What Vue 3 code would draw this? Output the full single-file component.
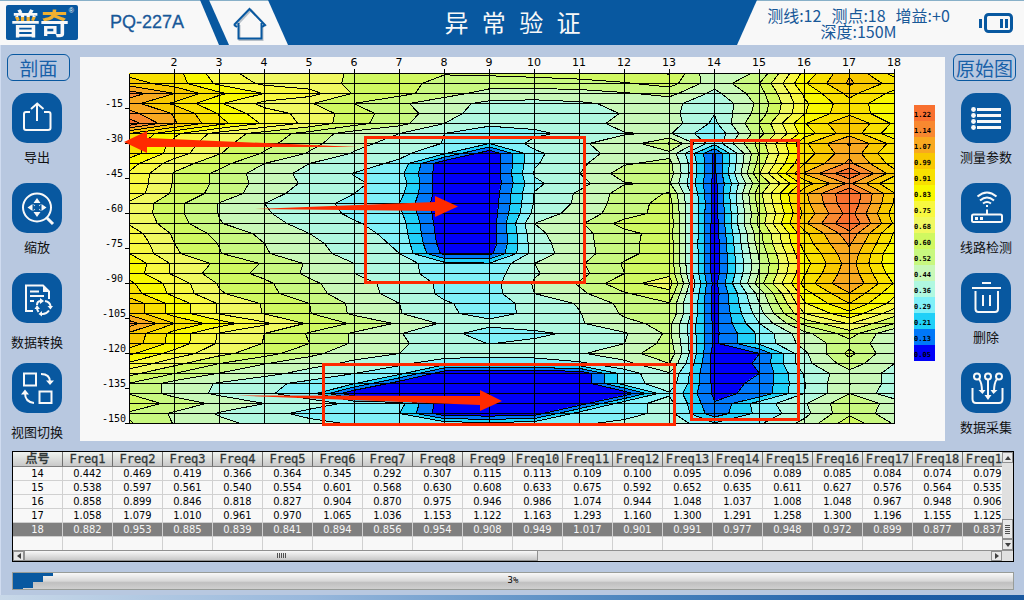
<script setup>
const COLS = 18
const STEP_X = 45
const STEP_Y = 10

// One line per depth, one value per measuring point, in units of colour bands.
const left = [
  [11.7, 11.4, 9.4, 8.5, 8.2, 7.94, 7.5, 7.05, 7.15, 7.3, 7.5, 7.7, 8.05],
  [12.5, 11.5, 9.77, 8.8, 8.5, 7.8, 7.3, 6.7, 6.5, 6.5, 6.6, 6.9, 7.4],
  [14.5, 13, 11.2, 9.98, 9.4, 7.9, 7.3, 6.45, 5.55, 5.5, 5.6, 5.9, 6.3],
  [13.4, 11.8, 10.1, 8.7, 8.1, 6.98, 6.2, 5.3, 4.8, 4.7, 4.87, 5.2, 5.4],
  [14.3, 12.9, 10.9, 9.4, 8.7, 7.45, 6.45, 5.4, 4.4, 4.35, 4.5, 5.07, 5.3],
  [15.6, 13.1, 11.3, 9.85, 8.7, 7.35, 6.3, 5, 4.15, 4.3, 4.5, 5.35, 5.5],
  [12, 10.2, 8.6, 7.6, 6.6, 5.5, 5, 4, 3.6, 3.8, 4.3, 4.95, 5.1],
  [11.6, 9.7, 8.3, 7.3, 6.3, 5.3, 4.6, 3.95, 3, 4.3, 4.9, 5.35, 7.15],
  [11.5, 9.5, 8.05, 6.9, 5.9, 4.9, 4.3, 3.1, 0.1, 3.8, 4.65, 5.4, 5.7],
  [10.4, 8.5, 7.35, 6, 5, 4.5, 3.75, 0.1, 0, 3.9, 4.8, 5.9, 6.3],
  [9.88, 7.9, 6.75, 5.5, 4.7, 3.95, 3.3, 0.2, 0, 4.1, 4.98, 6.45, 6.5],
  [9.8, 7.9, 6.75, 5.6, 4.8, 4.15, 3.6, 0.1, 0, 3.8, 4.7, 5.95, 6.1],
  [9.65, 7.8, 6.6, 5.45, 4.5, 4, 3.3, 0.2, 0.15, 4.05, 5.15, 6.4, 7.1],
  [8.8, 7.3, 5.95, 5, 4.4, 3.7, 3, 0.1, 0.2, 4.1, 5.2, 6.5, 7.4],
  [8.75, 7.3, 5.95, 5.1, 4.5, 3.8, 3.2, 0.15, 0.3, 4.3, 5.5, 6.5, 7.5],
  [8.9, 7.45, 6.05, 5.4, 4.6, 4.1, 3.5, 0.2, 0.25, 5, 5.85, 7.4, 7.6],
  [9.5, 7.85, 6.7, 5.75, 5, 4.4, 3.6, 0.3, 0.25, 4.75, 5.7, 6.7, 7.5],
  [9.8, 8, 6.95, 6, 5.2, 4.6, 3.8, 0.4, 0.3, 4.6, 5.65, 6.7, 7.6],
  [10, 8.15, 7.05, 6.1, 5.3, 4.7, 4, 0.7, 0.7, 4.5, 5.6, 6.7, 7.6],
  [10.75, 8.8, 7.8, 6.9, 5.85, 5, 4.5, 3.3, 3.1, 5, 5.85, 7.1, 7.7],
  [10.6, 8.8, 7.5, 6.75, 5.8, 5, 4.4, 3.5, 3.5, 4.9, 5.7, 7, 7.8],
  [11.2, 9.6, 7.9, 7.2, 6.2, 5.4, 4.6, 3.8, 3.6, 5.1, 6.1, 7.7, 8.5],
  [11.5, 9.7, 8.1, 7.3, 6.4, 5.4, 4.7, 3.8, 3.6, 5, 5.8, 6.9, 7.7],
  [12.7, 10.6, 8.9, 7.9, 7, 5.75, 5, 4.1, 3.6, 4.3, 5.1, 6.3, 6.95],
  [12.7, 10.6, 8.9, 7.95, 7.05, 5.8, 5.05, 4.15, 3.7, 4.2, 4.95, 6.15, 7],
  [14.5, 12, 10.5, 9.2, 7.85, 6.85, 5.85, 4.85, 4.25, 4.5, 4.9, 5.75, 6.3],
  [12.8, 10.6, 8.9, 8, 6.9, 5.85, 5.05, 4.3, 3.55, 3.8, 4.2, 4.9, 6.2],
  [12.6, 10.6, 8.85, 7.95, 7, 5.85, 5.2, 4.3, 3.98, 4.2, 4.6, 5, 6.4],
  [11.2, 9.6, 8.3, 7.4, 6.3, 5.35, 5, 4.6, 4.4, 4.5, 4.9, 5.6, 6.7],
  [9.8, 8.3, 7, 6.05, 5.35, 4.8, 4.2, 3.4, 3.3, 3.4, 3.8, 4.7, 6],
  [8.3, 7, 5.95, 5.3, 4.65, 4, 3.3, 0.2, 0.1, 0.1, 0.1, 3.5, 4.9],
  [6.95, 5.6, 4.9, 4.3, 3.7, 3.05, 0.3, 0, 0, 0, 0.1, 3.5, 4.6],
  [6.95, 5.6, 4.8, 4.15, 3.5, 0, 0, 0, 0, 0, 0, 0.3, 3.9],
  [7.7, 6.7, 5.7, 5, 4.4, 3.8, 3.4, 0.2, 0, 0, 0.4, 3.7, 4.3],
  [6.85, 5.85, 4.9, 4.35, 3.7, 3.4, 3, 0.3, 0.2, 0.4, 3.5, 3.7, 4.3],
  [7.1, 5.95, 5.25, 4.7, 4.3, 3.9, 3.8, 3.6, 3.3, 3.6, 3.9, 4.2, 4.7],
]

// Readings of points 14 to 18, one list per point, one value per frequency.
const readings = {
  14: [0.442, 0.469, 0.419, 0.366, 0.364, 0.345, 0.292, 0.307, 0.115, 0.113, 0.109, 0.1, 0.095, 0.096, 0.089, 0.085, 0.084, 0.074, 0.079],
  15: [0.538, 0.597, 0.561, 0.54, 0.554, 0.601, 0.568, 0.63, 0.608, 0.633, 0.675, 0.592, 0.652, 0.635, 0.611, 0.627, 0.576, 0.564, 0.535],
  16: [0.858, 0.899, 0.846, 0.818, 0.827, 0.904, 0.87, 0.975, 0.946, 0.986, 1.074, 0.944, 1.048, 1.037, 1.008, 1.048, 0.967, 0.948, 0.906],
  17: [1.058, 1.079, 1.01, 0.961, 0.97, 1.065, 1.036, 1.153, 1.122, 1.163, 1.293, 1.16, 1.3, 1.291, 1.258, 1.3, 1.196, 1.155, 1.125],
  18: [0.882, 0.953, 0.885, 0.839, 0.841, 0.894, 0.856, 0.954, 0.908, 0.949, 1.017, 0.901, 0.991, 0.977, 0.948, 0.972, 0.899, 0.877, 0.837],
}
const points = Object.keys(readings)

const deepRight = [
  [0.3, 6, 10.6, 13.5, 10],
  [0.4, 6.1, 10.9, 13.7, 10.4],
  [0.6, 6.6, 11.4, 14, 10.9],
  [0.5, 5.4, 10.6, 12.95, 10.2],
  [0.6, 5, 9.9, 12, 9.6],
  [0.6, 4.6, 9, 10.7, 8.4],
  [0.7, 4, 7.3, 9.1, 7],
  [0.75, 3.2, 5.7, 7.5, 5],
  [0.8, 3.2, 5.4, 6.6, 5.3],
  [0.5, 1, 4.8, 7.3, 5.1],
  [0.5, 1.1, 4.7, 6.5, 5],
  [0.6, 1, 4.1, 5.7, 4.7],
  [0.7, 1.15, 3.95, 6.02, 4.6],
  [0.8, 1.2, 4, 6, 4.3],
  [1.05, 3.5, 4.9, 6.8, 5.6],
  [1.4, 3.3, 4.7, 6.8, 5.4],
  [3.1, 3.9, 5.3, 7.6, 5.9],
]

const grid = left.map((row, r) => {
  const right = r < 19 ? points.map((p) => (readings[p][r] - 0.05) / 0.078125) : deepRight[r - 19]
  return [...row, ...right]
})
const ROWS = grid.length

const bands = [
  ['#0000f8', '0.05'], ['#0078f8', '0.13'], ['#20d0f8', '0.21'], ['#80f0f8', '0.29'],
  ['#b0f8e0', '0.36'], ['#c8f8b8', '0.44'], ['#c8f880', '0.52'], ['#d0f860', '0.60'],
  ['#f0f860', '0.68'], ['#f8f840', '0.75'], ['#f8f800', '0.83'], ['#f8e000', '0.91'],
  ['#f8c800', '0.99'], ['#f8a820', '1.07'], ['#f88830', '1.14'], ['#f87030', '1.22'],
]
const legend = [...bands].reverse()

const X0 = 49
const Y0 = 16
const at = (p) => `${p[0].toFixed(1)} ${p[1].toFixed(1)}`

function contour(level) {
  let fill = ''
  let line = ''
  for (let r = 0; r < ROWS - 1; r++) {
    for (let c = 0; c < COLS - 1; c++) {
      const x = X0 + c * STEP_X
      const y = Y0 + r * STEP_Y
      const quad = [
        [x, y, grid[r][c]],
        [x + STEP_X, y, grid[r][c + 1]],
        [x + STEP_X, y + STEP_Y, grid[r + 1][c + 1]],
        [x, y + STEP_Y, grid[r + 1][c]],
      ]
      const shape = []
      const cuts = []
      quad.forEach((a, i) => {
        const b = quad[(i + 1) % 4]
        if (a[2] >= level) shape.push(a)
        if (a[2] >= level !== b[2] >= level) {
          const t = (level - a[2]) / (b[2] - a[2])
          const p = [a[0] + t * (b[0] - a[0]), a[1] + t * (b[1] - a[1])]
          shape.push(p)
          cuts.push(p)
        }
      })
      if (shape.length > 2) fill += 'M' + shape.map(at).join('L') + 'Z'
      for (let i = 0; i + 1 < cuts.length; i += 2) line += `M${at(cuts[i])}L${at(cuts[i + 1])}`
    }
  }
  return { fill, line }
}
const layers = bands.slice(1).map(([color], i) => ({ color, ...contour(i + 1) }))

const xTicks = Array.from({ length: 17 }, (_, i) => ({ n: i + 2, x: X0 + (i + 1) * STEP_X }))
const yTicks = Array.from({ length: 10 }, (_, i) => ({ n: -15 * (i + 1), y: Y0 + 35 * (i + 1) }))
const gridPath =
  Array.from({ length: ROWS }, (_, r) => `M${X0} ${Y0 + r * STEP_Y}H${X0 + 765}`).join('') +
  xTicks.map((t) => `M${t.x} ${Y0 - 5}V${Y0 + 350}`).join('') +
  yTicks.map((t) => `M${X0 - 5} ${t.y}H${X0}`).join('') +
  `M${X0} ${Y0}V${Y0 + 350}`

const leftTools = [
  { name: '导出', icon: 'export' },
  { name: '缩放', icon: 'zoom' },
  { name: '数据转换', icon: 'convert', low: true },
  { name: '视图切换', icon: 'swap', low: true },
]
const rightTools = [
  { name: '测量参数', icon: 'list' },
  { name: '线路检测', icon: 'router' },
  { name: '删除', icon: 'trash' },
  { name: '数据采集', icon: 'collect' },
]
const sides = [
  { key: 'left', mode: '剖面', tools: leftTools },
  { key: 'right', mode: '原始图', tools: rightTools },
]
const progress = 3
</script>

<template>
  <div class="app">
    <header class="top">
      <div class="logo"><span class="pu">普</span><span class="qi">奇</span><sup>®</sup></div>
      <div class="model">PQ-227A</div>
      <div class="stripe"></div>
      <button class="home" aria-label="主页">
        <svg width="36" height="36" viewBox="0 0 36 36" fill="none" stroke="#0858a0" stroke-width="2">
          <path d="M3 19L18 3L33 19M6.500 18V33H29.500V18" stroke="#b8c0c8" transform="translate(1 1)" />
          <path d="M2 19L17.500 3L33 19L30 21" />
          <path d="M2 19L5 21M6.500 17V32.500H29.500V17" />
        </svg>
      </button>
      <h1 class="title">异&nbsp;&nbsp;常&nbsp;&nbsp;验&nbsp;&nbsp;证</h1>
      <div class="status">
        <p><span>测线:12</span><span>测点:18</span><span>增益:+0</span></p>
        <p><span>深度:150M</span></p>
      </div>
      <svg class="battery" width="36" height="22" viewBox="0 0 36 22">
        <rect x="6.500" y="2.500" width="26" height="17" rx="3" fill="none" stroke="#0858a0" stroke-width="3" />
        <path d="M0 7H3V16H0ZM21 7H24V16H21ZM26 7H29V16H26Z" fill="#0858a0" />
      </svg>
    </header>

    <main class="work">
      <nav v-for="side in sides" :key="side.key" class="side" :class="side.key">
        <button class="mode">{{ side.mode }}</button>
        <button v-for="t in side.tools" :key="t.icon" class="tool" :class="{ low: t.low }">
          <svg class="icon" width="50" height="50" viewBox="0 0 50 50" fill="none" stroke="#f8f8f8" stroke-width="2">
            <g v-if="t.icon === 'export'">
              <path d="M18 19H14Q12 19 12 21V35Q12 37 14 37H36Q38.500 37 38.500 35V21Q38.500 19 36.500 19H32" />
              <path d="M25 28V12M19 16L25.200 10.500L31.500 16" />
            </g>
            <g v-else-if="t.icon === 'zoom'">
              <circle cx="25" cy="24.500" r="14" />
              <path d="M34.500 34.500L41 41" stroke-width="3" />
              <path d="M25 15L28.500 20H21.500ZM25 34L28.500 29H21.500ZM15.500 24.500L20.500 21V28ZM34.500 24.500L29.500 21V28Z" fill="#f8f8f8" stroke="none" />
              <path d="M22 22.500L22.500 22M27.500 22L28 22.500M22 26.500L22.500 27M27.500 27L28 26.500" />
            </g>
            <g v-else-if="t.icon === 'convert'">
              <path d="M21 38H14V12.500H31L37 18.500V26" />
              <path d="M31 12V19H37Z" fill="#f8f8f8" stroke="none" />
              <path d="M18 18.500H27M18 23H32M18 28H22" />
              <path d="M25 32Q25 28 29 28M33 28Q38 29 38.500 33M37 37.500Q34 41.500 30 41M26.500 39Q25 37 25 35" />
              <path d="M28 25L32 28L28 31ZM35.500 33H41L38.500 36.500ZM30 38V43.500L26.500 41ZM22.500 36H28L25 32Z" fill="#f8f8f8" stroke="none" />
            </g>
            <g v-else-if="t.icon === 'swap'">
              <path d="M12 10.500H24V22.500H12ZM27.500 28.500H39.500V40H27.500Z" />
              <path d="M29 11Q38 11 38 19M22 40Q13 39 13 30" />
              <path d="M34 17.500H42L38 22ZM9 31.500H17L13 26.500Z" fill="#f8f8f8" stroke="none" />
            </g>
            <g v-else-if="t.icon === 'list'" fill="#f8f8f8" stroke="none">
              <circle v-for="n in 4" :key="n" cx="12.500" :cy="10.500 + n * 6" r="2.400" />
              <path d="M16 15H40V18H16ZM16 21H40V24H16ZM16 27H40V30H16ZM16 33H40V36H16Z" />
            </g>
            <g v-else-if="t.icon === 'router'">
              <rect x="11" y="31.500" width="30" height="7.500" rx="1.500" />
              <path d="M26 31V26.500M16.500 13.500Q26 5.500 35.500 13.500M19 17.500Q26 11.500 33 17.500M22 20.500Q26 17.500 30 20.500" />
              <path d="M25 22H27V24H25ZM14 34H17V37H14ZM19 34H22V37H19Z" fill="#f8f8f8" stroke="none" />
            </g>
            <g v-else-if="t.icon === 'trash'">
              <path d="M21 10H30M11 15H40M14.500 18V36Q14.500 39 17.500 39H34Q37 39 37 36V18M22 22V33M29 22V33" />
            </g>
            <g v-else>
              <circle cx="16" cy="13.500" r="3" />
              <circle cx="27" cy="13.500" r="3" />
              <circle cx="38" cy="13.500" r="3" />
              <path d="M18 16Q21 20 21 28M27 17V34M36 16Q33 20 33 28" />
              <path d="M17.500 27H24.500L21.500 31ZM23.500 32H30.500L27 37ZM29.500 27H36.500L32.500 31Z" fill="#f8f8f8" stroke="none" />
              <path d="M11.500 25V36Q11.500 40 15 40H38Q41.500 40 41.500 36V25" />
            </g>
          </svg>
          <span class="name">{{ t.name }}</span>
        </button>
      </nav>

      <section class="plot">
        <svg viewBox="0 0 865 384" class="chart" role="img" aria-label="异常剖面">
          <g shape-rendering="crispEdges">
            <rect x="49" y="16" width="765" height="350" fill="#0000f8" />
            <path v-for="l in layers" :key="'f' + l.color" :d="l.fill" :fill="l.color" />
          </g>
          <g transform="translate(0.5 0.5)" stroke="#000" fill="none" shape-rendering="crispEdges">
            <path v-for="l in layers" :key="'l' + l.color" :d="l.line" />
            <path :d="gridPath" />
          </g>
          <g class="xlab">
            <text v-for="t in xTicks" :key="t.n" :x="t.x" y="9">{{ t.n }}</text>
          </g>
          <g class="ylab">
            <text v-for="t in yTicks" :key="t.n" :x="t.n > -100 ? 43 : 46" :y="t.y - 1">{{ t.n }}</text>
          </g>
          <g v-for="(b, i) in legend" :key="b[1]">
            <rect x="834" :y="48 + i * 16" width="21" height="16" :fill="b[0]" shape-rendering="crispEdges" />
            <text class="leg" x="834" :y="60 + i * 16">{{ b[1] }}</text>
          </g>
          <g fill="none" stroke="#ff2a00" stroke-width="3">
            <path d="M285.500 80.500H504.500V225.500H285.500ZM243.500 307.500H594.500V367.500H243.500ZM611.500 83.500H718.500V362.500H611.500Z" />
          </g>
          <g fill="#ff2a00">
            <path d="M44 85L67 74V81L278 90L67 90V96Z" />
            <path d="M175 152L355 145V139L378 149.500L355 160V154Z" />
            <path d="M155 338.500L400 339V333L422 344L400 354V348Z" />
          </g>
        </svg>
      </section>
    </main>

    <section class="data">
      <div class="scroll">
        <table>
          <thead>
            <tr>
              <th>点号</th>
              <th v-for="n in 19" :key="n">Freq{{ n }}</th>
            </tr>
          </thead>
          <tbody>
            <tr v-for="p in points" :key="p" :class="{ selected: p === '18' }">
              <td>{{ p }}</td>
              <td v-for="(v, i) in readings[p]" :key="i">{{ v.toFixed(3) }}</td>
            </tr>
            <tr>
              <td v-for="n in 20" :key="n"></td>
            </tr>
          </tbody>
        </table>
      </div>
      <div class="vbar">
        <button class="arrow" aria-label="向上"><svg width="6" height="4"><path d="M0 4L3 0L6 4Z" fill="#404040" /></svg></button>
        <div class="space"></div>
        <div class="thumb"></div>
        <button class="arrow" aria-label="向下"><svg width="6" height="4"><path d="M0 0H6L3 4Z" fill="#404040" /></svg></button>
      </div>
      <div class="hbar">
        <button class="arrow" aria-label="向左"><svg width="4" height="6"><path d="M4 0V6L0 3Z" fill="#404040" /></svg></button>
        <div class="thumb"></div>
        <div class="space"></div>
        <button class="arrow" aria-label="向右"><svg width="4" height="6"><path d="M0 0V6L4 3Z" fill="#404040" /></svg></button>
      </div>
    </section>

    <div class="progress" role="progressbar" aria-label="进度" :aria-valuenow="progress" aria-valuemin="0" aria-valuemax="100">
      <div class="done"></div>
      <span>{{ progress }}%</span>
    </div>
    <footer class="foot"></footer>
  </div>
</template>

<style>
body {
  margin: 0;
  background: #b8c8e0;
}
</style>

<style scoped>
.app {
  display: flex;
  flex-direction: column;
  min-height: 100vh;
  background: #b8c8e0;
  box-shadow: inset 1px 0 #d0dcf0;
  font-family: "Liberation Sans", "Noto Sans CJK SC", sans-serif;
}
button {
  border: 0;
  padding: 0;
  margin: 0;
  background: none;
  font: inherit;
  color: inherit;
}
h1, p {
  margin: 0;
}
.top {
  display: flex;
  align-items: center;
  box-sizing: border-box;
  height: 45px;
  background: #f8f8f8;
  box-shadow: inset 0 1px #88b0c8;
}
.logo {
  position: relative;
  box-sizing: border-box;
  width: 72px;
  height: 35px;
  margin-left: 6px;
  padding-left: 5px;
  border-radius: 2px;
  background: #0858a0;
  font: 700 29px/34px "Noto Sans CJK SC", sans-serif;
  white-space: nowrap;
}
.pu, .qi {
  color: transparent;
  background-clip: text;
}
.pu {
  background-image: linear-gradient(#f8f8f8 16px, #f0b030 16px, #f0b030 20px, #f8f8f8 20px);
}
.qi {
  background-image: linear-gradient(#f0b030 20px, #f8f8f8 20px);
}
.logo sup {
  position: absolute;
  top: 2px;
  right: 4px;
  color: #f8f8f8;
  font: 7px/8px "Liberation Sans", sans-serif;
}
.model {
  width: 122px;
  padding-left: 32px;
  box-sizing: border-box;
  color: #185898;
  font-size: 18px;
  -webkit-text-stroke: 0.3px #185898;
}
.stripe {
  width: 29px;
  height: 45px;
  background: #0858a0;
  clip-path: polygon(0 0, 9px 0, 29px 45px, 19px 45px);
}
.home {
  width: 39px;
  height: 36px;
  padding-left: 3px;
  margin-top: 2px;
}
.title {
  flex: 1;
  height: 45px;
  clip-path: polygon(0 0, 100% 0, calc(100% - 20px) 100%, 20px 100%);
  background: #0858a0;
  color: #f8f8f8;
  font-size: 24px;
  font-weight: 400;
  line-height: 48px;
  text-align: center;
  white-space: nowrap;
}
.status {
  width: 203px;
  color: #185898;
  font: 16px/16px "Noto Sans CJK SC", sans-serif;
}
.status p {
  display: flex;
  justify-content: center;
  gap: 10px;
}
.battery {
  margin: 0 9px 0 19px;
}
.work {
  display: grid;
  grid-template-columns: 80px 1fr 79px;
  padding-top: 9px;
}
.side {
  grid-row: 1;
  display: flex;
  flex-direction: column;
  align-items: center;
}
.left {
  grid-column: 1;
  padding-right: 6px;
}
.right {
  grid-column: 3;
  padding-left: 3px;
}
.mode {
  box-sizing: border-box;
  width: 63px;
  height: 27px;
  margin-bottom: 12px;
  border: 1px solid #0858a0;
  border-radius: 6px;
  color: #1860a8;
  font: 19px/24px "Noto Sans CJK SC", sans-serif;
}
.left .mode {
  margin-left: 3px;
}
.right .mode {
  margin-right: 3px;
}
.tool {
  display: flex;
  flex-direction: column;
  align-items: center;
  height: 90px;
}
.tool:last-child {
  height: 78px;
}
.icon {
  flex: none;
  border-radius: 15px;
  background: #0858a0;
}
.name {
  margin-top: 5px;
  color: #101010;
  font: 13px/18px "Noto Sans CJK SC", sans-serif;
  white-space: nowrap;
}
.low .name {
  margin-top: 10px;
}
.plot {
  grid-column: 2;
  grid-row: 1;
  align-self: start;
  margin-top: 3px;
  background: #f8f8f8;
}
.chart {
  display: block;
  width: 100%;
}
.xlab {
  font: 11px "DejaVu Sans", sans-serif;
  text-anchor: middle;
}
.ylab {
  font: 10px "DejaVu Sans Mono", monospace;
  text-anchor: end;
}
.leg {
  font: 700 7px "DejaVu Sans Mono", monospace;
}
.data {
  display: grid;
  grid-template-columns: minmax(0, 1fr) 11px;
  grid-template-rows: 98px 11px;
  margin: 10px 10px 0 12px;
  border: 1px solid #000;
  background: #f8f8f8;
}
.scroll {
  overflow: hidden;
}
table {
  width: 1000px;
  table-layout: fixed;
  border-collapse: separate;
  border-spacing: 0;
}
th {
  box-sizing: border-box;
  height: 15px;
  padding: 0;
  overflow: hidden;
  border-right: 1px solid #707070;
  border-bottom: 1px solid #808080;
  background: linear-gradient(#f0f4f0, #c8c8c8);
  color: #303838;
  font: 500 12px/14px "DejaVu Sans Mono", "Noto Sans CJK SC", monospace;
  -webkit-text-stroke: 0.3px #303838;
}
td {
  box-sizing: border-box;
  height: 14px;
  padding: 0;
  border-right: 1px solid #d0d0d0;
  border-bottom: 1px solid #d0d0d0;
  color: #000;
  font: 11px/13px "DejaVu Sans Condensed", "DejaVu Sans", sans-serif;
  text-align: center;
}
.selected td {
  background: #808080;
  color: #f8f8f8;
}
.vbar, .hbar {
  display: flex;
  background: #e0e0e0;
}
.vbar {
  flex-direction: column;
}
.hbar {
  grid-column: 1 / 3;
  padding-right: 11px;
  border-top: 1px solid #909090;
  box-sizing: border-box;
}
.space {
  flex: 1;
}
.arrow {
  display: grid;
  place-items: center;
  flex: none;
  box-sizing: border-box;
  width: 11px;
  height: 11px;
  border: 1px solid #909090;
  background: #e8e8e8;
}
.hbar .arrow {
  height: 10px;
}
.vbar .thumb {
  height: 20px;
  box-sizing: border-box;
  border: 1px solid #909090;
  background:
    repeating-linear-gradient(#505050 0 1px, transparent 1px 2px) center / 5px 9px no-repeat,
    #e8e8e8;
}
.hbar .thumb {
  flex: 0 0 52%;
  box-sizing: border-box;
  border: 1px solid #909090;
  border-top: 0;
  background:
    repeating-linear-gradient(90deg, #505050 0 1px, transparent 1px 2px) center / 9px 5px no-repeat,
    linear-gradient(#f8f8f8, #c8c8c8);
}
.progress {
  position: relative;
  box-sizing: border-box;
  height: 18px;
  margin: 10px 10px 0 12px;
  border: 1px solid #989c98;
  background: linear-gradient(#f8f8f8, #d8d8d8 50%, #c0c0c0 60%, #d0d0d0);
  font: 9px/15px "DejaVu Sans Mono", monospace;
  text-align: center;
}
.done {
  position: absolute;
  inset: 0 auto 0 0;
  width: 4%;
  background: #0858a0;
  clip-path: polygon(0 0, 100% 0, 100% 3px, 75% 3px, 75% 9px, 50% 9px, 50% 15px, 25% 15px, 25% 100%, 0 100%);
}
.foot {
  height: 5px;
  margin-top: auto;
  background: linear-gradient(90deg, #c8d8e8, #98b8dc 30%, #5088c0 60%, #2060a8 85%, #1858a0);
}
</style>
